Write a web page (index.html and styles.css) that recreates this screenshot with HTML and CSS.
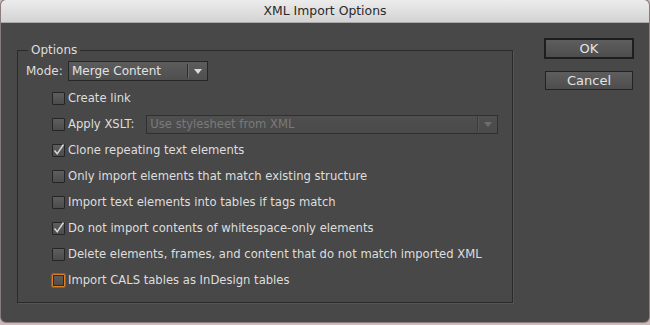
FILE: index.html
```html
<!DOCTYPE html>
<html lang="en">
<head>
<meta charset="utf-8">
<title>XML Import Options</title>
<link rel="stylesheet" href="styles.css">
</head>
<body>
<div class="window">
  <div class="titlebar">XML Import Options</div>
  <div class="content">
    <div class="group">
      <span class="legend">Options</span>
      <div class="mode-row">
        <span class="mode-label">Mode:</span>
        <div class="select mode-select">
          <span class="select-text">Merge Content</span>
          <span class="select-sep"></span>
          <span class="select-arrow"></span>
        </div>
      </div>
      <div class="row"><span class="cb"></span><span class="label">Create link</span></div>
      <div class="row"><span class="cb"></span><span class="label">Apply XSLT:</span>
        <div class="select xslt-select disabled">
          <span class="select-text">Use stylesheet from XML</span>
          <span class="select-sep"></span>
          <span class="select-arrow"></span>
        </div>
      </div>
      <div class="row"><span class="cb checked"><svg viewBox="0 0 13 13" width="13" height="13"><path d="M2.5 6.5 L5.2 9.8 L11.5 0.5" fill="none" stroke="#d8d8d8" stroke-width="1.5"/></svg></span><span class="label">Clone repeating text elements</span></div>
      <div class="row"><span class="cb"></span><span class="label">Only import elements that match existing structure</span></div>
      <div class="row"><span class="cb"></span><span class="label">Import text elements into tables if tags match</span></div>
      <div class="row"><span class="cb checked"><svg viewBox="0 0 13 13" width="13" height="13"><path d="M2.5 6.5 L5.2 9.8 L11.5 0.5" fill="none" stroke="#d8d8d8" stroke-width="1.5"/></svg></span><span class="label">Do not import contents of whitespace-only elements</span></div>
      <div class="row"><span class="cb"></span><span class="label">Delete elements, frames, and content that do not match imported XML</span></div>
      <div class="row"><span class="cb focus"></span><span class="label">Import CALS tables as InDesign tables</span></div>
    </div>
    <div class="buttons">
      <div class="btn default">OK</div>
      <div class="btn">Cancel</div>
    </div>
  </div>
</div>
</body>
</html>
```
FILE: styles.css
```css
html, body {
  margin: 0;
  padding: 0;
}
body {
  width: 650px;
  height: 325px;
  background: #cdb9b9;
  font-family: "DejaVu Sans", "Liberation Sans", sans-serif;
  font-size: 11.6px;
  overflow: hidden;
}
.window {
  width: 648px;
  height: 322px;
  margin-left: 1px;
  background: #484848;
  border-radius: 5px;
  overflow: hidden;
  box-shadow: 0 0 0 1px #8a7c7c;
}
.titlebar {
  height: 22px;
  line-height: 22px;
  text-align: center;
  font-size: 12.4px;
  color: #2a2a2a;
  background: linear-gradient(#ececec, #d3d3d3);
  border-bottom: 1px solid #a9a9a9;
}
.content {
  display: flex;
  align-items: flex-start;
}
.group {
  position: relative;
  margin: 27px 0 0 16px;
  width: 478px;
  padding: 10px 8px 9px 8px;
  border: 1px solid #2a2a2a;
  box-shadow: 1px 1px 0 #555;
}
.legend {
  position: absolute;
  left: 10px;
  top: -9px;
  padding: 0 3px;
  background: #484848;
  color: #dedede;
  line-height: 16px;
  font-size: 12px;
}
.mode-row {
  display: flex;
  align-items: center;
  height: 20px;
  margin-bottom: 4px;
  color: #dedede;
  font-size: 12px;
}
.mode-label {
  width: 42px;
}
.select {
  position: relative;
  display: flex;
  align-items: center;
  box-sizing: border-box;
  border: 1px solid #262626;
  background: linear-gradient(#5c5c5c, #4f4f4f);
  color: #e2e2e2;
}
.mode-select {
  width: 140px;
  height: 20px;
}
.select-text {
  flex: 1;
  padding-left: 3px;
  white-space: nowrap;
}
.select-sep {
  width: 1px;
  height: 14px;
  background: #2e2e2e;
  box-shadow: 1px 0 0 #6a6a6a;
  margin-right: 6px;
}
.select-arrow {
  width: 0;
  height: 0;
  border-left: 4px solid transparent;
  border-right: 4px solid transparent;
  border-top: 5px solid #dcdcdc;
  margin-right: 5px;
}
.xslt-select {
  width: 352px;
  height: 19px;
  margin-left: 12px;
  background: linear-gradient(#4f4f4f, #4a4a4a);
  border-color: #303030;
}
.disabled .select-text {
  color: #7a7a7a;
}
.disabled .select-sep {
  background: #3a3a3a;
  box-shadow: 1px 0 0 #585858;
}
.disabled .select-arrow {
  border-top-color: #6e6e6e;
}
.row {
  display: flex;
  align-items: center;
  height: 26px;
  padding-left: 26px;
  color: #dedede;
}
.cb {
  box-sizing: border-box;
  width: 13px;
  height: 13px;
  border: 1px solid #252525;
  background: linear-gradient(#5e5e5e, #4c4c4c);
  border-radius: 1px;
  margin-right: 3px;
  position: relative;
  flex: none;
}
.cb svg {
  position: absolute;
  left: -1px;
  top: -1px;
}
.cb.focus {
  border-color: #e08020;
  box-shadow: 0 0 0 1px #9a5a1c, inset 0 0 0 1px #2a2a2a;
}
.label {
  white-space: nowrap;
}
.buttons {
  display: flex;
  flex-direction: column;
  margin: 15px 0 0 31px;
  gap: 12px;
}
.btn {
  box-sizing: border-box;
  width: 88px;
  height: 19px;
  line-height: 17px;
  text-align: center;
  font-size: 13px;
  color: #e4e4e4;
  border: 1px solid #222;
  background: linear-gradient(#5e5e5e, #4d4d4d);
}
.btn.default {
  width: 90px;
  height: 21px;
  line-height: 17px;
  border: 2px solid #1e1e1e;
}
.buttons .btn:not(.default) {
  margin-left: 1px;
}
```
